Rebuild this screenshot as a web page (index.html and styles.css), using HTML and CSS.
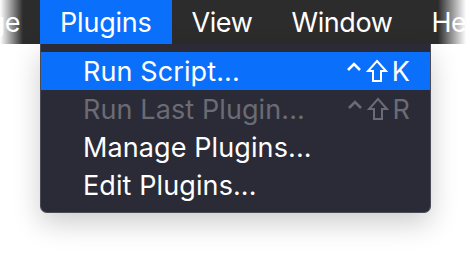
FILE: index.html
```html
<!DOCTYPE html>
<html lang="en">
<head>
    <meta charset="UTF-8">
    <title>Plugins menu</title>
    <link rel="stylesheet" href="styles.css">
</head>
<body>

    <div class="menubar">
        <span class="bar-item first">Arrange</span>
        <span class="bar-item active">Plugins</span>
        <span class="bar-item">View</span>
        <span class="bar-item">Window</span>
        <span class="bar-item">Help</span>
    </div>

    <div class="menu">
        <div class="menu-row selected">
            <span>Run Script...</span>
            <span class="keys">
                <svg class="ctrl" viewBox="0 0 16 10"><path d="M2 8 L8 2 L14 8" /></svg>
                <svg class="shift" viewBox="0 0 22 24"><path d="M11 2 L20 12 L15 12 L15 22 L7 22 L7 12 L2 12 Z" /></svg>
                <span>K</span>
            </span>
        </div>
        <div class="menu-row disabled">
            <span>Run Last Plugin...</span>
            <span class="keys">
                <svg class="ctrl" viewBox="0 0 16 10"><path d="M2 8 L8 2 L14 8" /></svg>
                <svg class="shift" viewBox="0 0 22 24"><path d="M11 2 L20 12 L15 12 L15 22 L7 22 L7 12 L2 12 Z" /></svg>
                <span>R</span>
            </span>
        </div>
        <div class="menu-row"><span>Manage Plugins...</span></div>
        <div class="menu-row"><span>Edit Plugins...</span></div>
    </div>

</body>
</html>
```

FILE: styles.css
```css
html, body { background-color: #fff; }
body { margin: 0; font-family: Inter, "Noto Sans", sans-serif; overflow: hidden; height: 260px; }

/* bar fades to white at both edges, the text stays white */
.menubar { display: flex; height: 44px; color: #fff; font-size: 27px; letter-spacing: -0.4px; white-space: nowrap; overflow: hidden;
    background: linear-gradient(to right, #fff 0, #2c2c2c 23px, #2c2c2c 438px, #fff 466px); }
.bar-item { display: flex; align-items: center; flex-shrink: 0; padding: 0 19.5px; }
.bar-item.first { width: 20px; padding-left: 0; padding-right: 20px; justify-content: flex-end; overflow: hidden; }
.bar-item.active { width: 92px; padding: 0 20px; background-color: #0a6ffb; letter-spacing: -0.2px; }

.menu { width: 389px; margin-left: 40px; padding: 8px 0; background-color: #2a2b36; border: 1px solid #4a4b55; border-top: none;
    border-radius: 0 0 7px 7px; box-shadow: 0 10px 28px rgba(0,0,0,0.2); color: #fff; font-size: 27px; letter-spacing: 0.1px; }
.menu-row { display: flex; justify-content: space-between; align-items: center; height: 38px; padding: 0 20px 0 42px; }
.menu-row.selected { background-color: #0a6ffb; }
.menu-row.disabled { color: #6a6b75; }

.keys { display: flex; align-items: center; gap: 4px; letter-spacing: 0; }
.keys svg { fill: none; stroke: currentColor; }
.ctrl { width: 16px; height: 10px; stroke-width: 2.6; margin-top: -8px; }
.shift { width: 22px; height: 24px; stroke-width: 2; stroke-linejoin: miter; }
```
